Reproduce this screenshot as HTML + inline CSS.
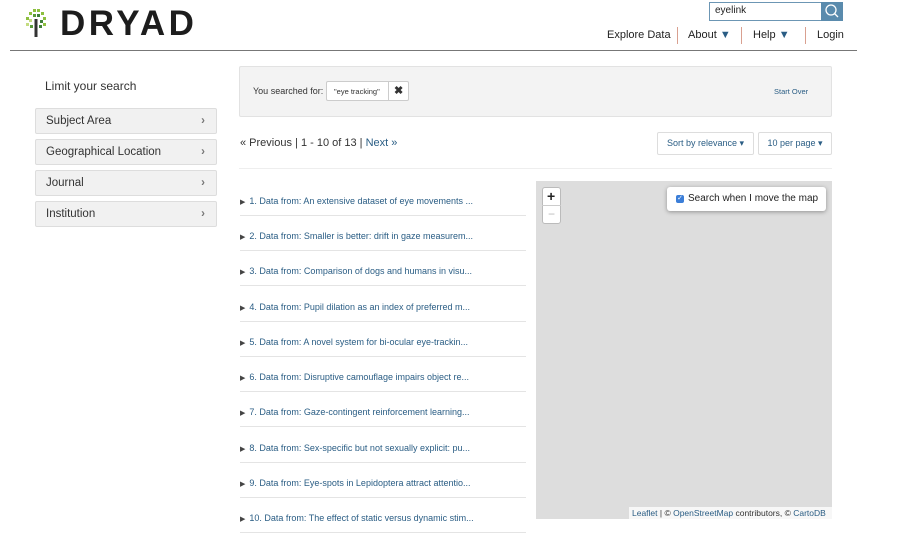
<!DOCTYPE html>
<html><head><style>
body{margin:0;width:900px;height:543px;background:#fff;font-family:"Liberation Sans",sans-serif;position:relative;overflow:hidden;color:#222}
.a{position:absolute}
.link{color:#2a5d84}
.side{position:absolute;left:35px;width:182px;height:26px;background:#f1f1f1;border:1px solid #ddd;border-radius:2px;font-size:11.5px;color:#333;line-height:24px;box-sizing:border-box;padding-left:10px}
.side span{position:absolute;right:11px;top:0;font-weight:bold;color:#777}
.res{position:absolute;left:240px;width:286px;font-size:9px;color:#2a5d84;height:21px;border-bottom:1px solid #e4e4e4;box-sizing:border-box;padding-top:1px}
.res b{color:#444;font-size:7px;margin-right:4px;font-weight:normal}
</style></head><body>
<svg class="a" style="left:24px;top:8px" width="24" height="30" viewBox="0 0 24 30">
<g fill="#8dbf3f"><rect x="9" y="1" width="3" height="3"/><rect x="13" y="1" width="3" height="3"/><rect x="5" y="4" width="3" height="3"/><rect x="17" y="4" width="3" height="3"/><rect x="2" y="9" width="3" height="3"/><rect x="19" y="9" width="3" height="3"/><rect x="9" y="6" width="3" height="3" fill="#5a9a3a"/><rect x="13" y="6" width="3" height="3" fill="#3f7f3a"/><rect x="5" y="11" width="3" height="3" fill="#c4dc80"/><rect x="16" y="12" width="3" height="3" fill="#3f7f3a"/><rect x="2" y="15" width="3" height="3" fill="#c4dc80"/><rect x="19" y="15" width="3" height="3"/><rect x="6" y="17" width="3" height="3" fill="#5a9a3a"/><rect x="15" y="17" width="3" height="3" fill="#3f7f3a"/></g>
<rect x="10.5" y="11" width="3" height="18" fill="#333"/></svg>
<div class="a" style="left:60px;top:4px;font-size:35px;font-weight:900;letter-spacing:3.5px;color:#1d1d1d">DRYAD</div>
<div class="a" style="left:10px;top:50px;width:847px;height:1px;background:#777"></div>
<div class="a" style="left:709px;top:2px;width:113px;height:19px;border:1px solid #6c96b4;box-sizing:border-box;font-size:10px;padding:2px 5px">eyelink</div>
<div class="a" style="left:821px;top:2px;width:22px;height:19px;background:#5a8bad"><svg width="22" height="19"><circle cx="10" cy="8" r="5" fill="none" stroke="#fff" stroke-width="1.3"/><line x1="13.5" y1="11.5" x2="17" y2="15" stroke="#fff" stroke-width="1.3"/></svg></div>
<div class="a" style="left:607px;top:29px;font-size:11px;color:#222">Explore Data</div>
<div class="a" style="left:677px;top:27px;width:1px;height:17px;background:#d9a090"></div>
<div class="a" style="left:688px;top:29px;font-size:11px">About <span style="color:#2a5d84;font-size:11px">▼</span></div>
<div class="a" style="left:741px;top:27px;width:1px;height:17px;background:#d9a090"></div>
<div class="a" style="left:753px;top:29px;font-size:11px">Help <span style="color:#2a5d84;font-size:11px">▼</span></div>
<div class="a" style="left:805px;top:27px;width:1px;height:17px;background:#d9a090"></div>
<div class="a" style="left:817px;top:29px;font-size:11px">Login</div>

<div class="a" style="left:45px;top:79px;font-size:12px;color:#333">Limit your search</div>
<div class="side" style="top:108px">Subject Area<span>›</span></div>
<div class="side" style="top:139px">Geographical Location<span>›</span></div>
<div class="side" style="top:170px">Journal<span>›</span></div>
<div class="side" style="top:201px">Institution<span>›</span></div>

<div class="a" style="left:239px;top:66px;width:593px;height:51px;background:#f3f3f3;border:1px solid #e2e2e2;box-sizing:border-box;border-radius:2px"></div>
<div class="a" style="left:253px;top:86px;font-size:9px;color:#333">You searched for:</div>
<div class="a" style="left:326px;top:81px;width:83px;height:20px;background:#fff;border:1px solid #ccc;border-radius:2px;box-sizing:border-box"></div>
<div class="a" style="left:388px;top:81px;width:1px;height:20px;background:#ccc"></div>
<div class="a" style="left:334px;top:87px;font-size:7.5px;color:#333">"eye tracking"</div>
<div class="a" style="left:394px;top:84px;font-size:11px;font-weight:bold;color:#333">✖</div>
<div class="a link" style="left:774px;top:87px;font-size:7.5px">Start Over</div>

<div class="a" style="left:240px;top:137px;font-size:11px;color:#333">« Previous | 1 - 10 of 13 | <span class="link">Next »</span></div>
<div class="a" style="left:657px;top:132px;width:97px;height:23px;border:1px solid #ddd;border-radius:2px;box-sizing:border-box;font-size:9px;color:#2a5d84;text-align:center;line-height:21px">Sort by relevance ▾</div>
<div class="a" style="left:758px;top:132px;width:74px;height:23px;border:1px solid #ddd;border-radius:2px;box-sizing:border-box;font-size:9px;color:#2a5d84;text-align:center;line-height:21px">10 per page ▾</div>
<div class="a" style="left:239px;top:168px;width:593px;height:1px;background:#eee"></div>

<div class="res" style="top:195px"><b>▶</b>1. Data from: An extensive dataset of eye movements ...</div>
<div class="res" style="top:230px"><b>▶</b>2. Data from: Smaller is better: drift in gaze measurem...</div>
<div class="res" style="top:265px"><b>▶</b>3. Data from: Comparison of dogs and humans in visu...</div>
<div class="res" style="top:301px"><b>▶</b>4. Data from: Pupil dilation as an index of preferred m...</div>
<div class="res" style="top:336px"><b>▶</b>5. Data from: A novel system for bi-ocular eye-trackin...</div>
<div class="res" style="top:371px"><b>▶</b>6. Data from: Disruptive camouflage impairs object re...</div>
<div class="res" style="top:406px"><b>▶</b>7. Data from: Gaze-contingent reinforcement learning...</div>
<div class="res" style="top:442px"><b>▶</b>8. Data from: Sex-specific but not sexually explicit: pu...</div>
<div class="res" style="top:477px"><b>▶</b>9. Data from: Eye-spots in Lepidoptera attract attentio...</div>
<div class="res" style="top:512px"><b>▶</b>10. Data from: The effect of static versus dynamic stim...</div>

<div class="a" style="left:536px;top:181px;width:296px;height:338px;background:#dddddd"></div>
<div class="a" style="left:542px;top:187px;width:19px;height:37px;background:#fff;border:1px solid #bbb;border-radius:3px;box-sizing:border-box"></div>
<div class="a" style="left:542px;top:205px;width:19px;height:1px;background:#ccc"></div>
<div class="a" style="left:547px;top:188px;font-size:14px;font-weight:bold;color:#222">+</div>
<div class="a" style="left:548px;top:207px;font-size:12px;color:#bbb">−</div>
<div class="a" style="left:667px;top:187px;width:159px;height:24px;background:#fff;border-radius:3px;box-shadow:0 1px 4px rgba(0,0,0,.35)"></div>
<div class="a" style="left:676px;top:195px;width:8px;height:8px;background:#3b7ed8;border-radius:2px;color:#fff;font-size:7px;line-height:8px;text-align:center">✓</div>
<div class="a" style="left:688px;top:193px;font-size:10px;color:#222">Search when I move the map</div>
<div class="a" style="left:629px;top:507px;width:203px;height:12px;background:rgba(255,255,255,.75);font-size:8.5px;line-height:12px;color:#333;padding-left:3px">
<span class="link">Leaflet</span> | © <span class="link">OpenStreetMap</span> contributors, © <span class="link">CartoDB</span></div>
</body></html>
